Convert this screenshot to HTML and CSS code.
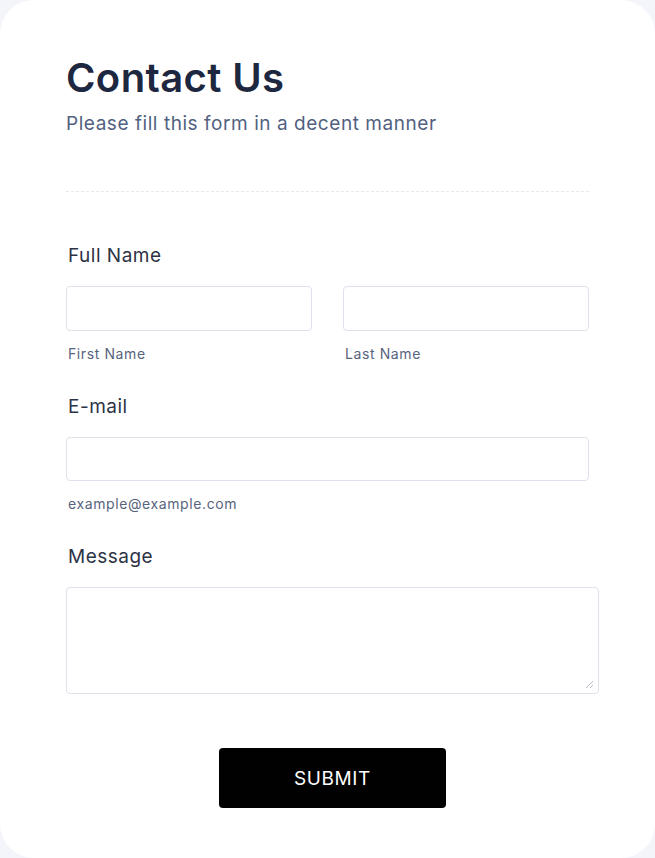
FILE: index.html
```html
<!DOCTYPE html>
<html lang="en">
<head>
<meta charset="utf-8">
<title>Contact Us</title>
<link rel="stylesheet" href="styles.css">
</head>
<body>
<main class="card">
  <header class="head">
    <h1 class="title">Contact Us</h1>
    <p class="subtitle">Please fill this form in a decent manner</p>
  </header>
  <hr class="divider">
  <form class="form">
    <div class="field">
      <label class="label">Full Name</label>
      <div class="name-row">
        <div class="sub">
          <input class="input" type="text">
          <span class="hint">First Name</span>
        </div>
        <div class="sub">
          <input class="input" type="text">
          <span class="hint">Last Name</span>
        </div>
      </div>
    </div>
    <div class="field">
      <label class="label">E-mail</label>
      <input class="input email" type="email">
      <span class="hint">example@example.com</span>
    </div>
    <div class="field">
      <label class="label">Message</label>
      <div class="area-wrap">
        <textarea class="textarea"></textarea>
        <svg class="grip" width="9" height="9" viewBox="0 0 9 9" aria-hidden="true">
          <path d="M8 1 L1 8 M8 5 L5 8" stroke="#b9bcc4" stroke-width="1" fill="none"/>
        </svg>
      </div>
    </div>
    <div class="actions">
      <button class="submit" type="button">SUBMIT</button>
    </div>
  </form>
</main>
</body>
</html>
```

FILE: styles.css
```css
* { box-sizing: border-box; }
html, body { margin: 0; padding: 0; }
body {
  background: #f3f5fb;
  font-family: Inter, "Noto Sans", sans-serif;
  width: 655px;
  height: 858px;
  overflow: hidden;
}
.card {
  background: #ffffff;
  border-radius: 34px;
  width: 655px;
  height: 858px;
  padding: 55px 56px 0 66px;
}
.head { margin: 0; }
.title {
  margin: 0;
  font-size: 40px;
  line-height: 46px;
  font-weight: 600;
  color: #1e2740;
  letter-spacing: 0.4px;
}
.subtitle {
  margin: 11px 0 0;
  font-size: 19px;
  line-height: 24px;
  color: #52617f;
  letter-spacing: 0.55px;
}
.divider {
  width: 523px;
  margin: 55px 0 0;
  border: 0;
  border-top: 1px dashed #e6e9ef;
  height: 0;
}
.form {
  display: flex;
  flex-direction: column;
  padding-top: 52px;
}
.field {
  display: flex;
  flex-direction: column;
  margin-bottom: 32px;
}
.label {
  font-size: 19px;
  line-height: 24px;
  color: #2c3345;
  padding-left: 2px;
  margin-bottom: 18px;
  letter-spacing: 0.5px;
}
.name-row {
  display: flex;
  gap: 31px;
  width: 523px;
}
.sub {
  display: flex;
  flex-direction: column;
  flex: 1;
}
.input {
  height: 45px;
  width: 100%;
  border: 1px solid #dde2eb;
  border-radius: 4px;
  background: #fff;
  font: inherit;
  margin: 0;
}
.email { width: 523px; height: 44px; }
.hint {
  font-size: 14px;
  line-height: 18px;
  color: #57647e;
  padding-left: 2px;
  margin-top: 14px;
  letter-spacing: 0.6px;
}
.area-wrap {
  position: relative;
  width: 533px;
  height: 107px;
}
.textarea {
  display: block;
  width: 533px;
  height: 107px;
  border: 1px solid #dde2eb;
  border-radius: 4px;
  margin: 0;
  font: inherit;
  resize: none;
}
.grip {
  position: absolute;
  right: 5px;
  bottom: 5px;
}
.actions {
  display: flex;
  justify-content: center;
  width: 533px;
  margin-top: 22px;
}
.submit {
  width: 227px;
  height: 60px;
  background: #010102;
  color: #ffffff;
  border: 0;
  border-radius: 4px;
  font-family: Inter, "Noto Sans", sans-serif;
  font-size: 19px;
  letter-spacing: 0.6px;
}
```
